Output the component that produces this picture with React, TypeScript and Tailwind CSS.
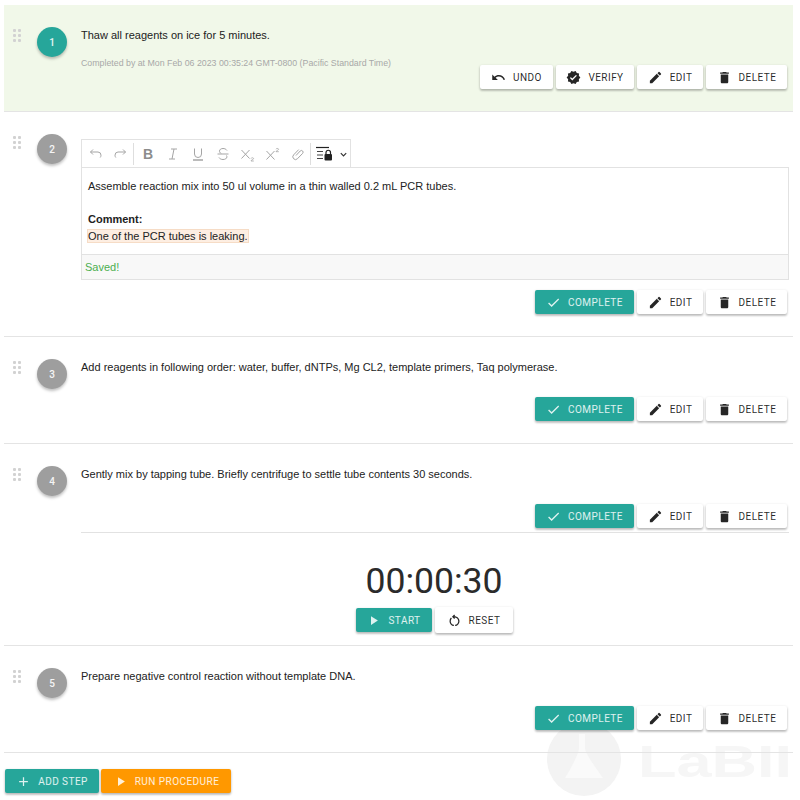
import React from "react";
import { MdUndo, MdVerified, MdEdit, MdDelete, MdCheck, MdPlayArrow, MdAdd, MdOutlineRestartAlt } from "react-icons/md";

const Grip = () => (
  <div className="grid grid-cols-2 gap-x-[2px] gap-y-[2px] w-[8px]">
    {[0, 1, 2, 3, 4, 5].map((i) => (
      <span key={i} className="w-[3px] h-[3px] bg-[#d2d2d2] rounded-[1px]" />
    ))}
  </div>
);

const Btn = ({ icon, label, w, kind = "white", h = "h-[24px]" }: { icon: React.ReactNode; label: string; w: string; kind?: "white" | "teal" | "orange"; h?: string }) => {
  const c =
    kind === "teal"
      ? "bg-[#26a69a] text-white/85"
      : kind === "orange"
        ? "bg-[#ff9800] text-white/85"
        : "bg-white text-black/85";
  return (
    <button className={`${w} ${h} ${c} flex items-center justify-center gap-[7px] rounded-[2px] text-[10px] tracking-[0.45px] font-normal font-[Roboto,sans-serif] shadow-[0_2px_2px_rgba(0,0,0,0.14),0_1px_3px_rgba(0,0,0,0.2)]`}>
      <span className="text-[15px] flex">{icon}</span>
      {label}
    </button>
  );
};

const Edit = () => <Btn w="w-[66px]" icon={<MdEdit />} label="EDIT" />;
const Del = () => <Btn w="w-[81px]" icon={<MdDelete />} label="DELETE" />;
const Complete = () => <Btn w="w-[99px]" kind="teal" icon={<MdCheck />} label="COMPLETE" />;

const Actions = ({ children, className = "" }: { children: React.ReactNode; className?: string }) => (
  <div className={`flex justify-end gap-[3px] pr-[6px] ${className}`}>{children}</div>
);

const Step = ({ n, done, children, className = "" }: { n: number; done?: boolean; children: React.ReactNode; className?: string }) => (
  <section className={`flex border-b border-[#e4e4e4] ${className}`}>
    <div className="w-[33px] pl-[9px] pt-[24px]">
      <Grip />
    </div>
    <div className="w-[44px] shrink-0 pt-[22px]">
      <div className={`w-[30px] h-[30px] rounded-full flex items-center justify-center text-white/90 text-[10px] font-[Roboto,sans-serif] font-medium shadow-[0_2px_3px_rgba(0,0,0,0.25)] ${done ? "bg-[#26a69a]" : "bg-[#9e9e9e]"}`}>
        {n}
      </div>
    </div>
    <div className="flex-1 min-w-0">{children}</div>
  </section>
);

const Txt = ({ children, className = "" }: { children: React.ReactNode; className?: string }) => (
  <p className={`text-[11px] leading-[16px] text-[#222] ${className}`}>{children}</p>
);

const I = ({ children, className = "" }: { children: React.ReactNode; className?: string }) => (
  <svg viewBox="0 0 16 16" className={`w-[16px] h-[16px] ${className}`} fill="none" stroke="#a5a5a5" strokeWidth="1">
    {children}
  </svg>
);

const Toolbar = () => (
  <div className="w-[270px] h-[29px] -mb-px border border-[#e2e2e2] border-b-0 flex items-center pl-[6px] bg-white">
    <div className="flex items-center gap-[8px]">
      <I><path d="M5 3.500 2.500 6 5 8.500M2.500 6H10a3.200 3.200 0 0 1 3 3.200c0 .9-.3 1.700-.8 2.300" /></I>
      <I><path d="M11 3.500 13.500 6 11 8.500M13.500 6H6a3.200 3.200 0 0 0-3 3.200c0 .9.3 1.700.8 2.300" /></I>
    </div>
    <span className="w-px h-[22px] bg-[#dedede] ml-[5px] mr-[6px]" />
    <div className="flex items-center gap-[9px]">
      <span className="w-[16px] text-center text-[14px] leading-none font-bold text-[#8c8c8c]">B</span>
      <I><path d="M6 3h6M4 13h6M9 3 7 13" /></I>
      <I><path d="M4.500 2.500V8a3.500 3.500 0 0 0 7 0V2.500" /><path d="M3 14h10" strokeWidth="1.500" /></I>
      <I><path d="M12 4.500C11 3 9.500 2.500 8 2.500c-2 0-3.500 1-3.500 2.600 0 1 .6 1.800 1.800 2.400M2.500 8h11M11.500 9.500c.3.5.4 1 .4 1.400 0 1.600-1.700 2.600-3.900 2.600-1.700 0-3.200-.6-4-2" /></I>
      <I><path d="M1.500 4l8 8.500M9.500 4l-8 8.500" /><path d="M11 12.500c.2-1 2.600-1 2.600.1 0 1-2.600 1.200-2.600 2.400h2.800" strokeWidth="0.8" /></I>
      <I><path d="M1.500 5l8 8.500M9.500 5l-8 8.500" /><path d="M11 3.200c.2-1 2.600-1 2.600.1 0 1-2.600 1.200-2.600 2.400h2.800" strokeWidth="0.8" /></I>
      <I><path d="M6 9.500 10.200 5a1.700 1.700 0 0 1 2.500 2.300L7.500 12.700a2.700 2.700 0 0 1-3.900-3.800L8.700 3.600" /></I>
    </div>
    <span className="w-px h-[22px] bg-[#dedede] ml-[4px] mr-[5px]" />
    <div className="flex items-center gap-[3px]">
      <svg viewBox="0 0 20 16" className="w-[20px] h-[16px]">
        <path d="M0 1.500h13" stroke="#222" strokeWidth="1.200" />
        <path d="M1 5.500h6M1 9h6M1 12.500h6" stroke="#444" strokeWidth="1" />
        <rect x="8.500" y="8" width="7.500" height="6.500" rx="1" fill="#222" />
        <path d="M10 8V6.500a2.200 2.200 0 0 1 4.500 0V8" fill="none" stroke="#222" strokeWidth="1.200" />
      </svg>
      <svg viewBox="0 0 10 10" className="w-[9px] h-[9px]">
        <path d="M2 3.500 5 6.500 8 3.500" fill="none" stroke="#333" strokeWidth="1.300" />
      </svg>
    </div>
  </div>
);

export default function App() {
  return (
    <div className="relative w-[800px] h-[800px] overflow-hidden bg-white font-['Liberation_Sans',Arial,sans-serif]">
      <div className="absolute left-[547px] top-[722px] flex items-center gap-[17px] select-none" aria-hidden="true">
        <div className="w-[74px] h-[74px] rounded-full bg-[#f3f3f3] flex items-center justify-center">
          <svg viewBox="0 0 38 44" className="w-[38px] h-[44px] -mt-[6px]">
            <path d="M14 0h6v14c0 6 14 24 18 30H0c4-6 14-24 14-30z" fill="#fafafa" />
          </svg>
        </div>
        <span className="font-['Liberation_Sans',sans-serif] font-bold text-[#f6f6f6] text-[45px] leading-none mt-[4px] origin-left scale-x-[1.4] whitespace-nowrap">LaBII</span>
      </div>

      <div className="relative pl-[4px] pr-[7px] pt-[5px]">
        <Step n={1} done className="bg-[#f1f8e9] h-[107px]">
          <Txt className="pt-[22px]">Thaw all reagents on ice for 5 minutes.</Txt>
          <p className="text-[8.800px] leading-[12px] text-[#a8a8a8] mt-[14px]">Completed by at Mon Feb 06 2023 00:35:24 GMT-0800 (Pacific Standard Time)</p>
          <Actions className="mt-[-4px]">
            <Btn w="w-[73px]" icon={<MdUndo />} label="UNDO" />
            <Btn w="w-[78px]" icon={<MdVerified />} label="VERIFY" />
            <Edit />
            <Del />
          </Actions>
        </Step>

        <Step n={2} className="h-[225px]">
          <div className="pt-[27px]">
            <Toolbar />
            <div className="w-[708px] border border-[#e2e2e2]">
              <div className="h-[86px] px-[6px] pt-[10px] text-[11px] leading-[16.500px] text-[#222]">
                <p>Assemble reaction mix into 50 ul volume in a thin walled 0.2 mL PCR tubes.</p>
                <p className="mt-[16.500px] font-bold">Comment:</p>
                <p><span className="bg-[#fdeee2] border border-[#f6dcc6] -ml-px">One of the PCR tubes is leaking.</span></p>
              </div>
              <div className="h-[25px] bg-[#f8f8f8] border-t border-[#e2e2e2] px-[3px] flex items-center text-[11px] text-[#4caf50]">Saved!</div>
            </div>
          </div>
          <Actions className="mt-[10px]">
            <Complete />
            <Edit />
            <Del />
          </Actions>
        </Step>

        <Step n={3} className="h-[107px]">
          <Txt className="pt-[22px]">Add reagents in following order: water, buffer, dNTPs, Mg CL2, template primers, Taq polymerase.</Txt>
          <Actions className="mt-[22px]">
            <Complete />
            <Edit />
            <Del />
          </Actions>
        </Step>

        <Step n={4} className="h-[202px]">
          <Txt className="pt-[22px]">Gently mix by tapping tube. Briefly centrifuge to settle tube contents 30 seconds.</Txt>
          <Actions className="mt-[22px]">
            <Complete />
            <Edit />
            <Del />
          </Actions>
          <div className="w-[708px] border-t border-[#e2e2e2] mt-[4px] flex flex-col items-center pr-[2px]">
            <div className="text-[35.600px] leading-[42px] text-[#2b2b2b] font-[Roboto,sans-serif] mt-[27px]">00:00:30</div>
            <div className="flex items-center gap-[3px] mt-[5px]">
              <Btn w="w-[76px]" kind="teal" icon={<MdPlayArrow />} label="START" />
              <Btn w="w-[78px]" h="h-[26px]" icon={<MdOutlineRestartAlt />} label="RESET" />
            </div>
          </div>
        </Step>

        <Step n={5} className="h-[107px]">
          <Txt className="pt-[22px]">Prepare negative control reaction without template DNA.</Txt>
          <Actions className="mt-[22px]">
            <Complete />
            <Edit />
            <Del />
          </Actions>
        </Step>

        <div className="flex gap-[2px] pt-[16px] pl-[1px]">
          <Btn w="w-[94px]" kind="teal" icon={<MdAdd />} label="ADD STEP" />
          <Btn w="w-[130px]" kind="orange" icon={<MdPlayArrow />} label="RUN PROCEDURE" />
        </div>
      </div>
    </div>
  );
}
